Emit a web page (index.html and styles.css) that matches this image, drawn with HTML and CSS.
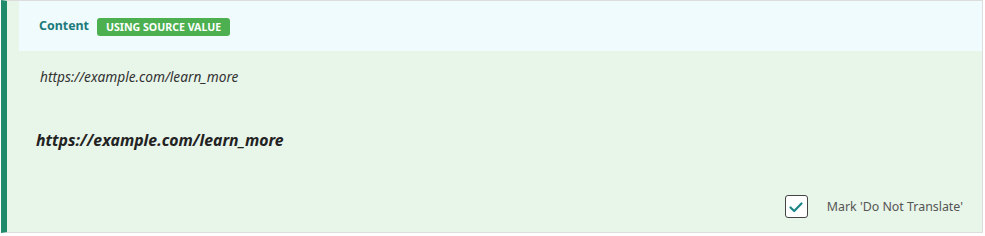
FILE: index.html
```html
<!DOCTYPE html>
<html>
<head>
<meta charset="utf-8">
<link rel="stylesheet" href="styles.css">
</head>
<body>
<div class="panel">
  <div class="header">
    <span class="title">Content</span>
    <span class="badge">USING SOURCE VALUE</span>
  </div>
  <div class="source">https://example.com/learn_more</div>
  <div class="target">https://example.com/learn_more</div>
  <div class="footer">
    <label class="dnt">
      <span class="checkbox">
        <svg width="16" height="16" viewBox="0 0 16 16"><path d="M2.5 8.5 L6.2 12 L13.5 4.5" fill="none" stroke="#1b8587" stroke-width="2.2" stroke-linecap="round" stroke-linejoin="round"/></svg>
      </span>
      <span class="dnt-label">Mark 'Do Not Translate'</span>
    </label>
  </div>
</div>
</body>
</html>
```
FILE: styles.css
```css
html, body {
  margin: 0;
  padding: 0;
  background: #ffffff;
}
body {
  font-family: "Noto Sans", "Open Sans", sans-serif;
}
.panel {
  margin-left: 1px;
  width: 975px;
  height: 231px;
  background: #e8f5e9;
  border-left: 6px solid #1f8b6b;
  border-top: 1px solid #dddddd;
  border-right: 1px solid #dddddd;
  border-bottom: 1px solid #dddddd;
  display: flex;
  flex-direction: column;
}
.header {
  margin-left: 12px;
  height: 50px;
  background: #f0fbfd;
  display: flex;
  align-items: center;
  padding-left: 20px;
  gap: 8px;
}
.title {
  font-size: 12.4px;
  font-weight: 700;
  color: #1a7a7b;
  margin-top: -2px;
}
.badge {
  background: #4caf50;
  color: #ffffff;
  font-size: 10.6px;
  font-weight: 700;
  height: 18px;
  line-height: 18px;
  padding: 0 9px;
  border-radius: 3px;
  margin-top: 2px;
}
.source {
  margin-top: 16px;
  padding-left: 33px;
  font-size: 13.7px;
  font-style: italic;
  color: #333333;
  line-height: 20px;
}
.target {
  margin-top: 42px;
  padding-left: 29px;
  font-size: 15.8px;
  font-style: italic;
  font-weight: 700;
  color: #222222;
  line-height: 22px;
}
.footer {
  margin-top: auto;
  display: flex;
  justify-content: flex-end;
  padding: 0 19px 14px 0;
}
.dnt {
  display: flex;
  align-items: center;
  gap: 19px;
}
.checkbox {
  width: 21px;
  height: 21px;
  border: 1.5px solid #444444;
  border-radius: 3px;
  background: #ffffff;
  display: flex;
  align-items: center;
  justify-content: center;
}
.dnt-label {
  font-size: 12.4px;
  color: #555555;
}
```
